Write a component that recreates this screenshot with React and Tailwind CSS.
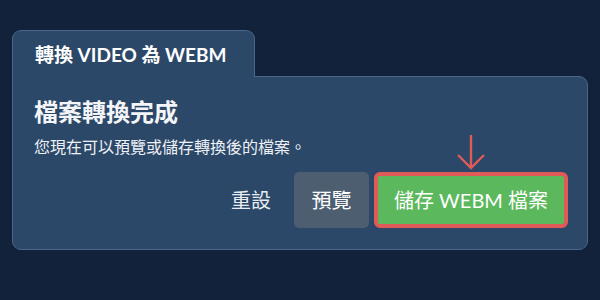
export default function App() {
  const font = { fontFamily: 'Lato, "Noto Sans CJK TC", sans-serif' };
  return (
    <div className="w-[600px] h-[300px] bg-[#11223a] pl-[12px] pt-[30px]" style={font}>
      <div className="relative z-10 -mb-px w-[243px] h-[47px] rounded-t-[9px] border border-b-0 border-[#4b6686] bg-[#2c4869] pl-[22px] pt-[11px]">
        <span className="text-[19px] font-bold text-white leading-[26px]">轉換 VIDEO 為 WEBM</span>
      </div>
      <div className="w-[576px] h-[174px] rounded-b-[9px] rounded-tr-[9px] border border-[#4b6686] bg-[#2c4869] pl-[21px] pt-[19px] pr-[19px]">
        <div className="text-[24px] font-bold text-[#f3f5f8] leading-[32px]">檔案轉換完成</div>
        <div className="mt-[8px] text-[16px] text-[#eef1f5] leading-[22px]">您現在可以預覽或儲存轉換後的檔案。</div>
        <div className="mt-[14px] flex items-center justify-end">
          <span className="text-[20px] text-[#e8ecf1] mr-[23px]">重設</span>
          <button className="h-[56px] w-[75px] rounded-[5px] bg-[#4e5e71] text-[20px] text-white mr-[5px]">預覽</button>
          <div className="relative">
            <svg className="absolute left-[82px] -top-[38px]" width="30" height="36" viewBox="0 0 30 36">
              <path d="M15 1 V34 M2 21 L15 34 L28 21" fill="none" stroke="#e05b57" strokeWidth="2.4" />
            </svg>
            <button className="h-[56px] w-[194px] rounded-[6px] border-[4px] border-[#e05b57] bg-[#5cb85c] text-[20px] text-white">儲存 WEBM 檔案</button>
          </div>
        </div>
      </div>
    </div>
  );
}
